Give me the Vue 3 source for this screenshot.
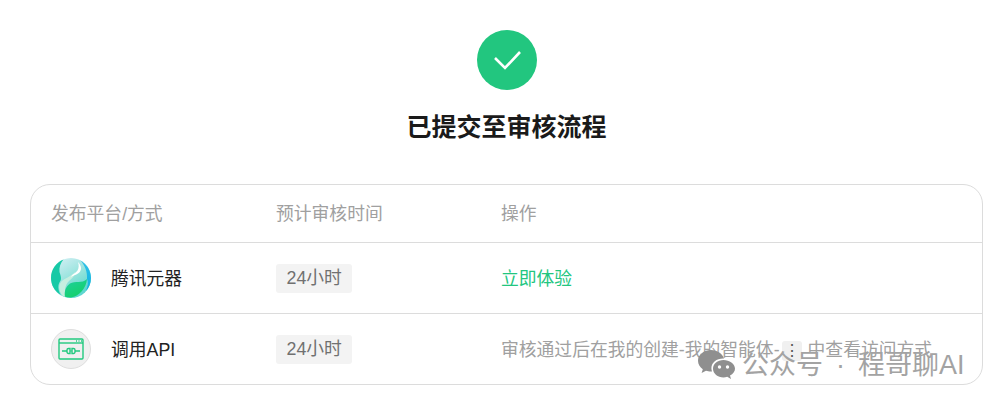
<template>
  <div class="page">
    <div class="result">
      <div class="check">
        <svg width="28" height="22" viewBox="0 0 28 22" fill="none">
          <path d="M2 9 L12 19 L27 3" stroke="#fff" stroke-width="2.6" />
        </svg>
      </div>
      <h1 class="title">已提交至审核流程</h1>
    </div>

    <div class="table">
      <div class="row head">
        <div class="cell text">发布平台/方式</div>
        <div class="cell text">预计审核时间</div>
        <div class="cell text">操作</div>
      </div>

      <div class="row">
        <div class="cell platform">
          <svg class="icon" width="40" height="40" viewBox="0 0 40 40">
            <defs>
              <linearGradient id="ball" x1="0.3" y1="0" x2="0.8" y2="0.8">
                <stop offset="0" stop-color="#cdeef2" />
                <stop offset="0.6" stop-color="#8fe2da" />
                <stop offset="1" stop-color="#5fd6d0" />
              </linearGradient>
              <linearGradient id="low" x1="0" y1="0" x2="0.6" y2="1">
                <stop offset="0" stop-color="#1fd0a0" />
                <stop offset="1" stop-color="#14d068" />
              </linearGradient>
              <linearGradient id="rim" x1="0.5" y1="0" x2="0.5" y2="1">
                <stop offset="0" stop-color="#2fc0ea" />
                <stop offset="1" stop-color="#10b2df" />
              </linearGradient>
            </defs>
            <circle cx="20" cy="20" r="20" fill="url(#ball)" />
            <path d="M29 2.300C35.500 5.800 40 12.400 40 20C40 25 38 29.800 34.800 33.300C37 28 37.500 24 36 21C36.500 14 34 7 29 2.300Z" fill="url(#rim)" />
            <path d="M12.500 1.600C5 4.500 0 11.600 0 20C0 27 3.600 33 9.500 36.800C7 32 6.500 27 9 23.500C11 21 9.500 17 8.500 14C8 9.500 9.500 5 12.500 1.600Z" fill="#17c9a6" />
            <path d="M24 14C20 19 13 20 10 24C7 28 8 34 11.500 37.800L15 39C13 33 14 27 18 23C21 20 24 18 24 14Z" fill="#c6eee0" />
            <path d="M14 38.800C13 33 15 28.500 19 25.500C24 22.500 31 26 36 21C35.500 30 28 38.500 20 39.500C18 39.600 16 39.400 14 38.800Z" fill="url(#low)" />
            <path d="M27 4C31 8 31 13 27 15.500C25 17 22 17.500 20 19C22 15.500 25 15 26.500 12.500C28 10 28 7 27 4Z" fill="#fff" />
          </svg>
          <span class="name">腾讯元器</span>
        </div>
        <div class="cell"><span class="tag">24小时</span></div>
        <div class="cell text"><a class="link">立即体验</a></div>
      </div>

      <div class="row">
        <div class="cell platform">
          <div class="icon api">
            <svg width="26" height="22" viewBox="0 0 26 22" fill="none" stroke="#22c97f" stroke-width="1.4">
              <rect x="1" y="1" width="24" height="20" rx="1" />
              <path d="M1 5H25" />
              <path d="M18 3H19M20.500 3H21.500M23 3H24" />
              <path d="M4 13H9M17 13H22M12.500 13H13.500" />
              <path d="M12 10.500H10.500A1.500 1.500 0 0 0 9 12V14A1.500 1.500 0 0 0 10.500 15.500H12Z" />
              <path d="M14 10.500H15.500A1.500 1.500 0 0 1 17 12V14A1.500 1.500 0 0 1 15.500 15.500H14Z" />
            </svg>
          </div>
          <span class="name">调用API</span>
        </div>
        <div class="cell"><span class="tag">24小时</span></div>
        <div class="cell note text">审核通过后在我的创建-我的智能体-<span class="dots">⋮</span>中查看访问方式</div>
      </div>

      <div class="watermark">
        <svg width="39" height="30" viewBox="0 0 39 30">
          <path d="M14 1C6.800 1 1 5.800 1 11.800C1 15.200 2.900 18.200 5.800 20.200L4.600 24L9 21.800C10.500 22.200 12 22.500 14 22.500L15 22.500C14.600 21.300 14.400 20.200 14.400 19.200C14.400 13.800 19.600 9.600 26 9.600L27 9.600C25.600 4.700 20.300 1 14 1Z" fill="#8f8f8f" />
          <path d="M26.500 11C20.700 11 16 14.900 16 19.700C16 24.500 20.700 28.400 26.500 28.400C27.800 28.400 29 28.200 30.200 27.800L34 30L33 26.500C36 24.900 38 22.500 38 19.700C38 14.900 32.300 11 26.500 11Z" fill="#8f8f8f" />
          <circle cx="22.500" cy="18" r="1.700" fill="#fff" />
          <circle cx="30.500" cy="18" r="1.700" fill="#fff" />
        </svg>
        <span class="mark">公众号<span class="sep">·</span>程哥聊AI</span>
      </div>
    </div>
  </div>
</template>

<script setup>
</script>

<style>
body {
  background: #fff;
}
</style>

<style scoped>
.page {
  width: 998px;
  height: 403px;
  padding: 30px 15px 0 30px;
  box-sizing: border-box;
  overflow: hidden;
  font-family: "Liberation Sans", "Noto Sans CJK SC", sans-serif;
}

.result {
  display: flex;
  flex-direction: column;
  align-items: center;
  width: 953px;
}

.check {
  width: 60px;
  height: 60px;
  border-radius: 50%;
  background: #22c67f;
  display: flex;
  align-items: center;
  justify-content: center;
}

.title {
  margin: 19px 0 0;
  font-size: 25px;
  line-height: 37px;
  font-weight: 700;
  color: #1a1a1a;
}

.table {
  position: relative;
  margin-top: 38px;
  width: 953px;
  height: 201px;
  box-sizing: border-box;
  border: 1px solid #dcdcdc;
  border-radius: 20px;
}

.row {
  display: grid;
  grid-template-columns: 225px 225px 1fr;
  align-items: center;
  height: 70px;
  padding-left: 20px;
  border-top: 1px solid #dcdcdc;
  font-size: 17.800px;
  color: #222;
}

.row.head {
  height: 57px;
  border-top: 0;
  color: #a0a0a0;
}

.text,
.name {
  padding-bottom: 3px;
}

.platform {
  display: flex;
  align-items: center;
  gap: 20px;
}

.icon {
  flex: none;
}

.api {
  width: 40px;
  height: 40px;
  box-sizing: border-box;
  border: 1px solid #dedede;
  border-radius: 50%;
  background: #f0f0f0;
  display: flex;
  align-items: center;
  justify-content: center;
}

.tag {
  display: inline-block;
  padding: 0 10.500px;
  height: 29px;
  line-height: 29px;
  border-radius: 3px;
  background: #f3f3f3;
  color: #707070;
}

.link {
  color: #22c67f;
}

.note {
  color: #a0a0a0;
  white-space: nowrap;
}

.dots {
  display: inline-block;
  width: 20px;
  height: 20px;
  line-height: 20px;
  margin: 0 6px 0 2px;
  border-radius: 3px;
  background: #f0f0f0;
  color: #555;
  text-align: center;
  font-size: 16px;
}

.watermark {
  position: absolute;
  left: 666px;
  top: 164px;
  display: flex;
  align-items: center;
  gap: 6px;
  font-size: 27px;
  line-height: 30px;
  color: #a3a3a3;
  white-space: nowrap;
}

.mark {
  position: relative;
  top: 1px;
}

.sep {
  display: inline-block;
  width: 35px;
  text-align: center;
}
</style>
